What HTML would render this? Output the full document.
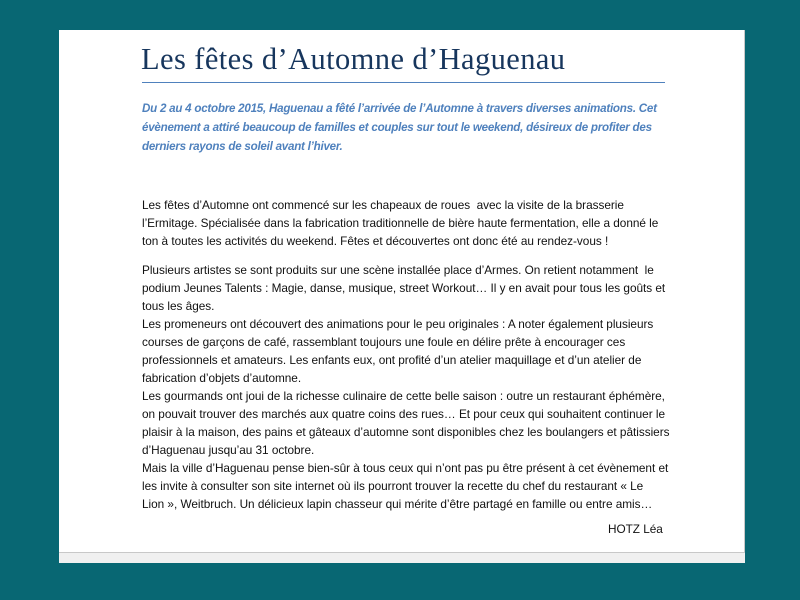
<!DOCTYPE html>
<html><head><meta charset="utf-8"><style>
html,body{margin:0;padding:0;}
body{width:800px;height:600px;background:#086773;position:relative;overflow:hidden;font-family:"Liberation Sans",sans-serif;}
.page{position:absolute;left:59px;top:30px;width:685px;height:522px;background:#fff;border-right:1px solid #c8c8c8;}
.strip{position:absolute;left:59px;top:552px;width:686px;height:11px;background:#f0f0f0;border-top:1px solid #c8c8c8;box-sizing:border-box;}
h1{position:absolute;left:141px;top:42px;margin:0;font-family:"Liberation Serif",serif;font-weight:normal;font-size:30.5px;color:#17365d;white-space:nowrap;letter-spacing:0.4px;}
.rule{position:absolute;left:142px;top:82px;width:523px;height:1px;background:#4f81bd;}
.intro{position:absolute;left:142px;top:99px;font-size:11.6px;line-height:19px;font-style:italic;font-weight:bold;color:#4f81bd;letter-spacing:-0.24px;}
.body{position:absolute;left:142px;font-size:11.8px;line-height:18px;color:#111;letter-spacing:-0.03px;}
.l{white-space:nowrap;}
</style></head><body>
<div class="page"></div>
<div class="strip"></div>
<h1>Les fêtes d’Automne d’Haguenau</h1>
<div class="rule"></div>
<div class="intro">
<div class="l">Du 2 au 4 octobre 2015, Haguenau a fêté l’arrivée de l’Automne à travers diverses animations. Cet</div>
<div class="l">évènement a attiré beaucoup de familles et couples sur tout le weekend, désireux de profiter des</div>
<div class="l">derniers rayons de soleil avant l’hiver.</div>
</div>
<div class="body" style="top:196px">
<div class="l">Les fêtes d’Automne ont commencé sur les chapeaux de roues &nbsp;avec la visite de la brasserie</div>
<div class="l">l’Ermitage. Spécialisée dans la fabrication traditionnelle de bière haute fermentation, elle a donné le</div>
<div class="l">ton à toutes les activités du weekend. Fêtes et découvertes ont donc été au rendez-vous !</div>
</div>
<div class="body" style="top:261px">
<div class="l">Plusieurs artistes se sont produits sur une scène installée place d’Armes. On retient notamment &nbsp;le</div>
<div class="l">podium Jeunes Talents : Magie, danse, musique, street Workout… Il y en avait pour tous les goûts et</div>
<div class="l">tous les âges.</div>
<div class="l">Les promeneurs ont découvert des animations pour le peu originales : A noter également plusieurs</div>
<div class="l">courses de garçons de café, rassemblant toujours une foule en délire prête à encourager ces</div>
<div class="l">professionnels et amateurs. Les enfants eux, ont profité d’un atelier maquillage et d’un atelier de</div>
<div class="l">fabrication d’objets d’automne.</div>
<div class="l">Les gourmands ont joui de la richesse culinaire de cette belle saison : outre un restaurant éphémère,</div>
<div class="l">on pouvait trouver des marchés aux quatre coins des rues… Et pour ceux qui souhaitent continuer le</div>
<div class="l">plaisir à la maison, des pains et gâteaux d’automne sont disponibles chez les boulangers et pâtissiers</div>
<div class="l">d’Haguenau jusqu’au 31 octobre.</div>
<div class="l">Mais la ville d’Haguenau pense bien-sûr à tous ceux qui n’ont pas pu être présent à cet évènement et</div>
<div class="l">les invite à consulter son site internet où ils pourront trouver la recette du chef du restaurant « Le</div>
<div class="l">Lion », Weitbruch. Un délicieux lapin chasseur qui mérite d’être partagé en famille ou entre amis…</div>
</div>
<div class="body" style="top:520px;left:608px"><div class="l">HOTZ Léa</div></div>
</body></html>
